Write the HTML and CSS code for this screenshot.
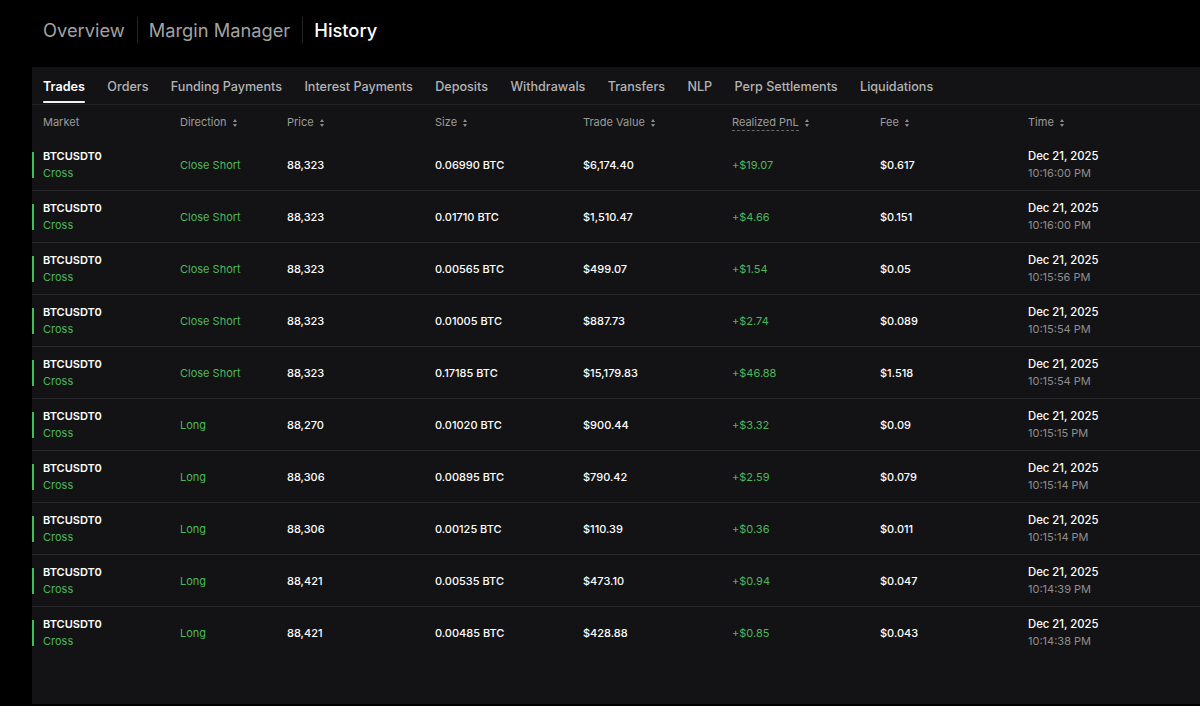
FILE: index.html
```html
<!DOCTYPE html>
<html>
<head>
<meta charset="utf-8">
<link rel="stylesheet" href="styles.css">
</head>
<body>
<div class="page">
  <nav class="topnav">
    <span class="nav-item">Overview</span>
    <span class="nav-sep"></span>
    <span class="nav-item">Margin Manager</span>
    <span class="nav-sep"></span>
    <span class="nav-item active">History</span>
  </nav>
  <section class="panel">
    <div class="tabs">
      <span class="tab active">Trades</span>
      <span class="tab">Orders</span>
      <span class="tab">Funding Payments</span>
      <span class="tab">Interest Payments</span>
      <span class="tab">Deposits</span>
      <span class="tab">Withdrawals</span>
      <span class="tab">Transfers</span>
      <span class="tab">NLP</span>
      <span class="tab">Perp Settlements</span>
      <span class="tab">Liquidations</span>
    </div>
    <div class="table">
      <div class="row head">
        <div class="cell">Market</div>
        <div class="cell">Direction <span class="sort"></span></div>
        <div class="cell">Price <span class="sort"></span></div>
        <div class="cell">Size <span class="sort"></span></div>
        <div class="cell">Trade Value <span class="sort"></span></div>
        <div class="cell"><span class="dotted">Realized PnL</span> <span class="sort"></span></div>
        <div class="cell">Fee <span class="sort"></span></div>
        <div class="cell">Time <span class="sort"></span></div>
      </div>
      <div id="rows"></div>
    </div>
  </section>
</div>
<script src="app.js"></script>
</body>
</html>
```

FILE: app.js
```js
const data = [
  ["Close Short","88,323","0.06990 BTC","$6,174.40","+$19.07","$0.617","10:16:00 PM"],
  ["Close Short","88,323","0.01710 BTC","$1,510.47","+$4.66","$0.151","10:16:00 PM"],
  ["Close Short","88,323","0.00565 BTC","$499.07","+$1.54","$0.05","10:15:56 PM"],
  ["Close Short","88,323","0.01005 BTC","$887.73","+$2.74","$0.089","10:15:54 PM"],
  ["Close Short","88,323","0.17185 BTC","$15,179.83","+$46.88","$1.518","10:15:54 PM"],
  ["Long","88,270","0.01020 BTC","$900.44","+$3.32","$0.09","10:15:15 PM"],
  ["Long","88,306","0.00895 BTC","$790.42","+$2.59","$0.079","10:15:14 PM"],
  ["Long","88,306","0.00125 BTC","$110.39","+$0.36","$0.011","10:15:14 PM"],
  ["Long","88,421","0.00535 BTC","$473.10","+$0.94","$0.047","10:14:39 PM"],
  ["Long","88,421","0.00485 BTC","$428.88","+$0.85","$0.043","10:14:38 PM"]
];
const rows = document.getElementById("rows");
rows.innerHTML = data.map(d => `
  <div class="row body">
    <div class="cell market"><span class="bar"></span><div class="sym">BTCUSDT0</div><div class="green">Cross</div></div>
    <div class="cell green">${d[0]}</div>
    <div class="cell val">${d[1]}</div>
    <div class="cell val">${d[2]}</div>
    <div class="cell val">${d[3]}</div>
    <div class="cell green">${d[4]}</div>
    <div class="cell val">${d[5]}</div>
    <div class="cell time"><div class="date">Dec 21, 2025</div><div class="clock">${d[6]}</div></div>
  </div>`).join("");
```

FILE: styles.css
```css
* { box-sizing: border-box; }
html, body { margin: 0; padding: 0; background: #000; }
body {
  font-family: Inter, "Noto Sans", "Liberation Sans", sans-serif;
  color: #fff;
  width: 1200px;
  height: 706px;
  overflow: hidden;
}
.page { display: flex; flex-direction: column; height: 706px; }
.topnav {
  display: flex;
  align-items: center;
  height: 67px;
  padding: 0 0 8px 43px;
}
.nav-item {
  font-size: 18.3px;
  color: #a3a3a3;
  font-weight: 400;
}
.nav-item.active { color: #fff; font-weight: 500; }
.nav-sep {
  width: 1px;
  height: 26px;
  background: #262626;
  margin: 0 11px 0 12px;
}
.panel {
  margin-left: 32px;
  flex: 1;
  margin-bottom: 2px;
  background: #131315;
  display: flex;
  flex-direction: column;
}
.tabs {
  display: flex;
  gap: 22.4px;
  padding: 0 0 0 11px;
  height: 38px;
  align-items: stretch;
  border-bottom: 1px solid #242427;
}
.tab {
  font-size: 12.6px;
  font-weight: 500;
  color: #b4b4b4;
  display: flex;
  align-items: center;
  padding-top: 1px;
  position: relative;
}
.tab.active { color: #fff; font-weight: 600; }
.tab.active::after {
  content: "";
  position: absolute;
  left: 0; right: 0; bottom: 1px;
  height: 2px;
  background: #f2f2f2;
  border-radius: 1px;
}
.row {
  display: grid;
  grid-template-columns: 137px 107px 148px 148px 149px 148px 148px 1fr;
  padding-left: 11px;
  align-items: center;
}
.row.head { height: 34px; font-size: 11px; color: #9c9c9c; }
.sort {
  display: inline-block;
  width: 5px;
  height: 8px;
  margin-left: 3px;
  vertical-align: -1px;
  position: relative;
}
.sort::before, .sort::after {
  content: "";
  position: absolute;
  left: 0;
  border-left: 2.5px solid transparent;
  border-right: 2.5px solid transparent;
}
.sort::before { top: 0; border-bottom: 3px solid #8a8a8a; }
.sort::after { bottom: 0; border-top: 3px solid #8a8a8a; }
.dotted { border-bottom: 1px dashed #6a6a6a; padding-bottom: 1px; }
.row.body {
  height: 52px;
  border-bottom: 1px solid #29292c;
  font-size: 11px;
}
.row.body:last-child { border-bottom: none; }
.val { color: #fff; font-weight: 500; }
.green { color: #4cb85c; }
.market { position: relative; line-height: 17px; }
.sym { font-weight: 600; color: #fff; }
.bar {
  position: absolute;
  left: -11px;
  top: 4px;
  bottom: 4px;
  width: 2px;
  background: #3fbf57;
}
.time { line-height: 17px; font-size: 11px; }
.date { color: #fff; font-weight: 500; font-size: 11.3px; }
.clock { color: #8e8e8e; font-size: 11px; }
```
